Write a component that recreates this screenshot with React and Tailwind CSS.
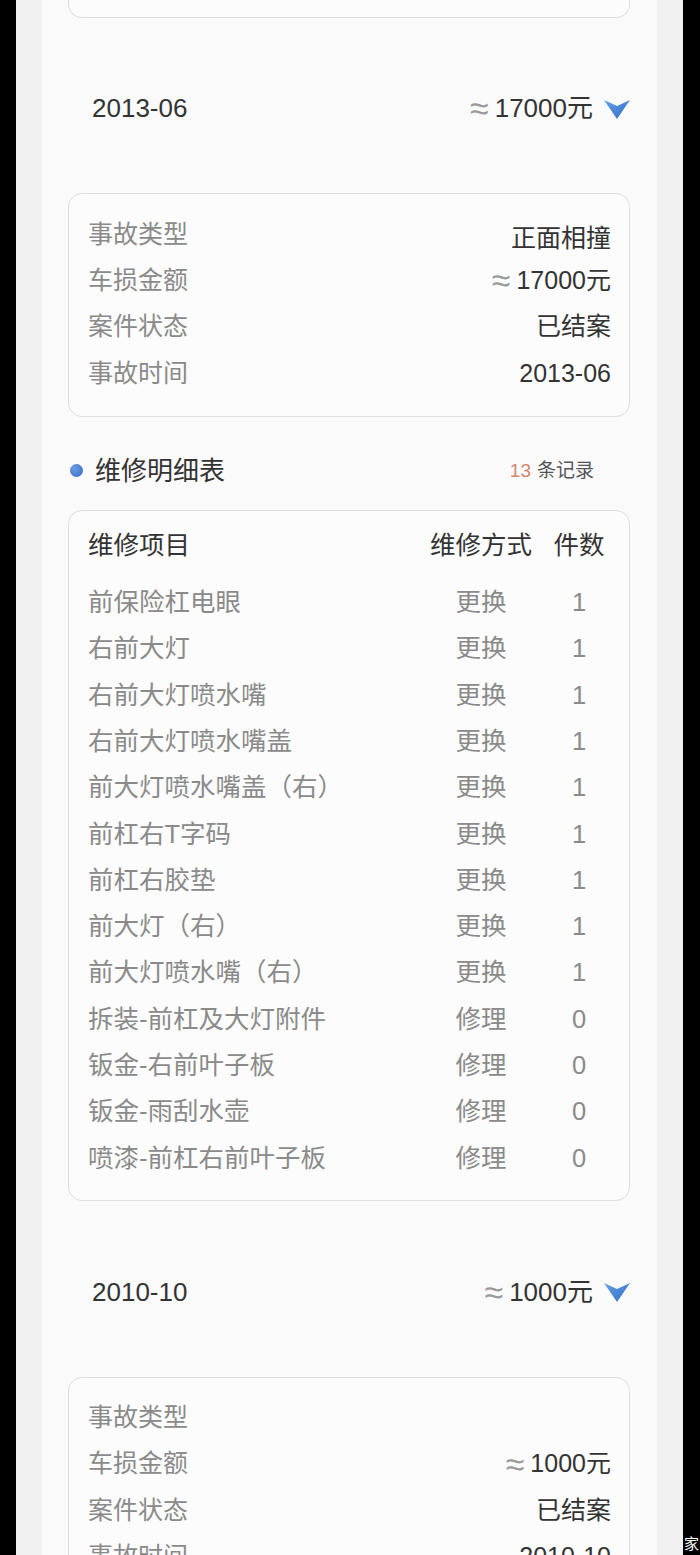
import React from 'react';

const font = "font-['Liberation_Sans','Noto_Sans_CJK_SC',sans-serif]";

const repairs = [
  ['前保险杠电眼', '更换', 1],
  ['右前大灯', '更换', 1],
  ['右前大灯喷水嘴', '更换', 1],
  ['右前大灯喷水嘴盖', '更换', 1],
  ['前大灯喷水嘴盖（右）', '更换', 1],
  ['前杠右T字码', '更换', 1],
  ['前杠右胶垫', '更换', 1],
  ['前大灯（右）', '更换', 1],
  ['前大灯喷水嘴（右）', '更换', 1],
  ['拆装-前杠及大灯附件', '修理', 0],
  ['钣金-右前叶子板', '修理', 0],
  ['钣金-雨刮水壶', '修理', 0],
  ['喷漆-前杠右前叶子板', '修理', 0],
];

const Arrow = () => (
  <svg width="26" height="20" viewBox="0 0 26 20" className="ml-[11px] mt-[3px]">
    <defs>
      <linearGradient id="arr" x1="0" y1="0" x2="1" y2="1">
        <stop offset="0" stopColor="#62a0ea" />
        <stop offset="1" stopColor="#336cc4" />
      </linearGradient>
    </defs>
    <polygon points="0,0 13,6 26,0 13,19" fill="url(#arr)" />
  </svg>
);

const Money = ({ value, size }) => (
  <span className="flex items-center">
    <span className="text-[34px] leading-none text-[#9a9a9a] mr-[6px] font-light">≈</span>
    <span className={`${size} text-[#333]`}>{value}元</span>
  </span>
);

const AccidentHeader = ({ date, amount }) => (
  <div className="h-[175px] pt-[5px] flex items-center justify-between pl-[24px] pr-[0px]">
    <span className="text-[26px] text-[#333] leading-none">{date}</span>
    <div className="flex items-center leading-none">
      <Money value={amount} size="text-[26px]" />
      <Arrow />
    </div>
  </div>
);

const InfoCard = ({ type, amount, status, time, typeOffset }) => (
  <div className="border border-[#dedede] rounded-[14px] pt-[17px] pb-[20px] pl-[19px] pr-[18px] bg-[#fcfcfc]">
    {[
      ['事故类型', type],
      ['车损金额', <Money key="m" value={amount} size="text-[25px]" />],
      ['案件状态', status],
      ['事故时间', time],
    ].map(([label, value], i) => (
      <div key={label} className="h-[46.3px] flex items-center justify-between leading-none">
        <span className="text-[25px] text-[#8a8a8a]">{label}</span>
        <span className={`text-[25px] text-[#333] ${i === 0 && typeOffset ? 'pt-[9px]' : ''}`}>{value}</span>
      </div>
    ))}
  </div>
);

export default function App() {
  return (
    <div className={`h-[1555px] overflow-hidden flex bg-black relative ${font}`}>
      <div className="w-[16px] bg-black" />
      <div className="w-[26px] bg-[#f1f1f1]" />
      <div className="flex-1 bg-[#fafafa] px-[26px] pr-[27px]">
        {/* tail of previous card */}
        <div className="h-[18px] border border-t-0 border-[#dedede] rounded-b-[14px] bg-[#fcfcfc]" />

        <AccidentHeader date="2013-06" amount="17000" />
        <InfoCard type="正面相撞" amount="17000" status="已结案" time="2013-06" typeOffset />

        <div className="h-[93px] pt-[14px] flex items-center justify-between pr-[36px] leading-none">
          <div className="flex items-center">
            <span className="w-[13px] h-[13px] rounded-full bg-[radial-gradient(circle_at_35%_35%,#6a9ce6,#3469c2)] ml-[2px]" />
            <span className="text-[26px] text-[#333] ml-[12px]">维修明细表</span>
          </div>
          <div className="flex items-center">
            <span className="text-[19px] text-[#d0866c]">13</span>
            <span className="text-[19px] text-[#555] ml-[6px]">条记录</span>
          </div>
        </div>

        <div className="border border-[#dedede] rounded-[14px] pt-[12px] pb-[18px] pl-[19px] pr-[24px] bg-[#fcfcfc]">
          <div className="grid grid-cols-[1fr_102px_52px] gap-x-[21px] h-[46px] items-center leading-none text-[25.5px] text-[#333]">
            <span>维修项目</span>
            <span className="text-center">维修方式</span>
            <span className="text-center">件数</span>
          </div>
          <div className="mt-[10.5px]">
            {repairs.map(([name, way, n]) => (
              <div key={name} className="grid grid-cols-[1fr_102px_52px] gap-x-[21px] h-[46.3px] items-center leading-none text-[25.5px] text-[#8a8a8a]">
                <span>{name}</span>
                <span className="text-center">{way}</span>
                <span className="text-center">{n}</span>
              </div>
            ))}
          </div>
        </div>

        <div className="pt-[1px]">
          <AccidentHeader date="2010-10" amount="1000" />
        </div>
        <InfoCard type="" amount="1000" status="已结案" time="2010-10" />
      </div>
      <div className="w-[26px] bg-[#f1f1f1]" />
      <div className="w-[17px] bg-black" />

      <span className="absolute right-[1px] bottom-[4px] text-[15px] leading-none text-white">家</span>
    </div>
  );
}
